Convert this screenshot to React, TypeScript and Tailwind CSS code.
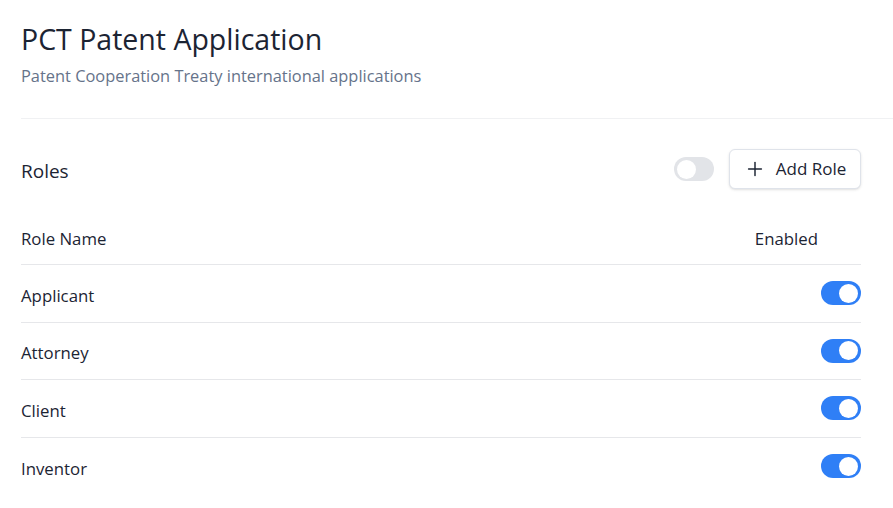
import { Plus } from "lucide-react";

const roles = ["Applicant", "Attorney", "Client", "Inventor"];

function Toggle({ on }: { on: boolean }) {
  return (
    <div
      className={`w-10 h-6 rounded-full p-[3px] flex items-center ${
        on ? "bg-[#2f7ff6] justify-end" : "bg-[#e2e4e8] justify-start"
      }`}
    >
      <div className="w-[19px] h-[19px] rounded-full bg-white" />
    </div>
  );
}

export default function App() {
  return (
    <div className="w-[893px] h-[508px] bg-white text-[#1c2433] font-['Open_Sans',sans-serif] overflow-hidden">
      {/* HEADER */}
      <div className="ml-[21px] pt-[21px] pb-[30px] border-b border-[#f0f1f3]">
        <h1 className="text-[28.5px] leading-9 font-normal">PCT Patent Application</h1>
        <p className="mt-[7px] text-[16.4px] leading-6 text-[#66738a]">
          Patent Cooperation Treaty international applications
        </p>
      </div>

      {/* ROLES */}
      <div className="pl-[21px] pr-[32px] pt-[30px]">
        <div className="flex items-center justify-between h-10">
          <h2 className="text-[19px] pt-1">Roles</h2>
          <div className="flex items-center gap-[15px]">
            <Toggle on={false} />
            <button className="h-10 w-[132px] flex items-center justify-center gap-2.5 border border-[#dfe3ea] rounded-md shadow-sm text-[17px] bg-white">
              <Plus size={22} strokeWidth={1.6} />
              Add Role
            </button>
          </div>
        </div>

        <div className="mt-6 h-[52px] flex items-center justify-between border-b border-[#e6e7ea] text-[16.8px]">
          <span>Role Name</span>
          <span className="mr-[43px]">Enabled</span>
        </div>

        {roles.map((r, i) => (
          <div
            key={r}
            className={`h-[57.5px] flex items-center justify-between text-[16.8px] ${
              i < roles.length - 1 ? "border-b border-[#e6e7ea]" : ""
            }`}
          >
            <span className="pt-1">{r}</span>
            <Toggle on={true} />
          </div>
        ))}
      </div>
    </div>
  );
}
